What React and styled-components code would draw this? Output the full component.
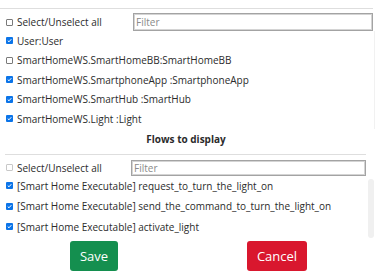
import styled, { createGlobalStyle } from "styled-components"

const GlobalStyle = createGlobalStyle`
	body {
		margin: 0;
		background: #fff;
		font-family: "Open Sans", "Noto Sans", sans-serif;
		color: #2b2b2b;
	}
`

const Panel = styled.div`
	width: 376px;
	height: 272px;
	overflow: hidden;
	display: flex;
	flex-direction: column;
`
const Rule = styled.div`
	height: 1px;
	background-color: #dedede;
	margin: ${(p) => p.$margin};
`
const HeaderRow = styled.div`
	display: flex;
	align-items: center;
	height: ${(p) => p.$height}px;
	margin-top: ${(p) => p.$top}px;
	padding-left: 6px;
`
const Check = styled.label`
	display: flex;
	align-items: center;
	gap: 4px;
	font-size: 10px;
	white-space: nowrap;
	flex: none;
	width: ${(p) => (p.$width ? `${p.$width}px` : "auto")};
	height: ${(p) => p.$height || 19.5}px;
`
const Box = styled.span`
	box-sizing: border-box;
	width: 7px;
	height: 7px;
	border-radius: 1px;
	display: flex;
	align-items: center;
	justify-content: center;
	border: ${(p) => (p.$checked ? "none" : `1px solid ${p.$disabled ? "#c8c8c8" : "#7a7a7a"}`)};
	background-color: ${(p) => (p.$checked ? "#0b74e8" : "#fff")};
`
const FilterInput = styled.input`
	box-sizing: border-box;
	width: ${(p) => p.$width}px;
	height: 100%;
	border: 1px solid #a3a3a3;
	box-shadow: inset 0 0 0 1px #d4d4d4;
	padding: 0 2px;
	font-family: "Open Sans", "Noto Sans", sans-serif;
	font-size: 10px;
	outline: none;
	&::placeholder {
		color: #8a8a8a;
	}
`
const ActorList = styled.div`
	display: flex;
	flex-direction: column;
	padding-left: 6px;
	border-right: 1px solid #f1f1f1;
	margin-right: 1px;
`
const Title = styled.div`
	height: 20px;
	line-height: 20px;
	text-align: center;
	font-weight: bold;
	font-size: 10px;
	padding-right: 4px;
`
const FlowArea = styled.div`
	display: flex;
	height: 62px;
	padding-right: 2px;
`
const FlowList = styled.div`
	flex: 1;
	display: flex;
	flex-direction: column;
	padding-left: 6px;
`
const ScrollTrack = styled.div`
	width: 6px;
	margin-top: 3px;
	border-radius: 3px;
	background-color: #f0f0f0;
`
const Buttons = styled.div`
	display: grid;
	grid-template-columns: 188px 178px;
	justify-items: center;
	margin-top: 3px;
`
const Button = styled.button`
	height: 30px;
	width: ${(p) => p.$width}px;
	border: none;
	border-radius: 3px;
	color: white;
	font-family: "Open Sans", "Noto Sans", sans-serif;
	font-size: 13px;
	font-weight: 500;
	background-color: ${(p) => p.$color};
	cursor: pointer;
`

const CheckBox = ({ checked, disabled }) => (
	<Box $checked={checked} $disabled={disabled}>
		{checked && (
			<svg width='5' height='5' viewBox='0 0 10 10'>
				<path d='M1.5 5.2 L4 7.6 L8.6 2.4' fill='none' stroke='#fff' strokeWidth='2' />
			</svg>
		)}
	</Box>
)

const actors = [
	{ name: "User:User", checked: true },
	{ name: "SmartHomeWS.SmartHomeBB:SmartHomeBB", checked: false },
	{ name: "SmartHomeWS.SmartphoneApp :SmartphoneApp", checked: true },
	{ name: "SmartHomeWS.SmartHub :SmartHub", checked: true },
	{ name: "SmartHomeWS.Light :Light", checked: true },
]

const flows = [
	"[Smart Home Executable] request_to_turn_the_light_on",
	"[Smart Home Executable] send_the_command_to_turn_the_light_on",
	"[Smart Home Executable] activate_light",
]

const App = () => {
	return (
		<Panel>
			<GlobalStyle />
			<Rule $margin='8px 3px 0 0' />

			<HeaderRow $height={18} $top={4}>
				<Check $width={127} $height={18}>
					<CheckBox />
					Select/Unselect all
				</Check>
				<FilterInput placeholder='Filter' $width={240} />
			</HeaderRow>

			<ActorList>
				{actors.map((a) => (
					<Check key={a.name}>
						<CheckBox checked={a.checked} />
						{a.name}
					</Check>
				))}
			</ActorList>

			<Title>Flows to display</Title>

			<Rule $margin='5px 10px 0 5px' />

			<HeaderRow $height={16} $top={5}>
				<Check $width={125} $height={16}>
					<CheckBox disabled />
					Select/Unselect all
				</Check>
				<FilterInput placeholder='Filter' $width={235} />
			</HeaderRow>

			<FlowArea>
				<FlowList>
					{flows.map((f) => (
						<Check key={f} $height={20.5}>
							<CheckBox checked />
							{f}
						</Check>
					))}
				</FlowList>
				<ScrollTrack />
			</FlowArea>

			<Buttons>
				<Button $width={48} $color='#148f4f'>Save</Button>
				<Button $width={60} $color='#d9172e'>Cancel</Button>
			</Buttons>
		</Panel>
	)
}

export default App
